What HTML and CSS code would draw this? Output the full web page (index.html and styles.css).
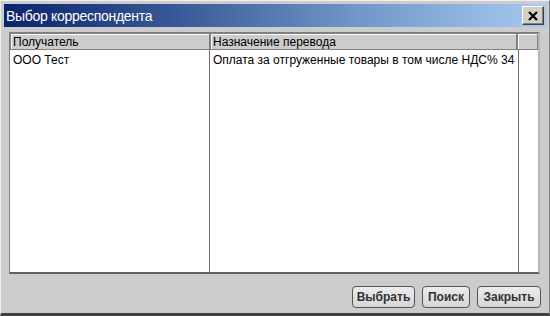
FILE: index.html
```html
<!DOCTYPE html>
<html lang="ru">
<head>
    <meta charset="UTF-8">
    <title>Выбор корреспондента</title>
    <link rel="stylesheet" href="styles.css">
</head>
<body>
    <div class="window">
        <div class="titlebar">
            <span class="title">Выбор корреспондента</span>
            <button class="close" type="button">
                <svg viewBox="0 0 10 10" width="10" height="10"><path d="M1 1L9 9M9 1L1 9" stroke="#000" stroke-width="2.2"></path></svg>
            </button>
        </div>

        <div class="table">
            <div class="table-head">
                <div class="th col-name">Получатель</div>
                <div class="th col-purpose">Назначение перевода</div>
                <div class="th col-corner"></div>
            </div>
            <div class="table-body">
                <div class="td col-name">ООО Тест</div>
                <div class="td col-purpose">Оплата за отгруженные товары в том числе НДС% 34</div>
                <div class="td col-corner"></div>
            </div>
        </div>

        <div class="buttons">
            <button class="btn btn-select" type="button">Выбрать</button>
            <button class="btn btn-search" type="button">Поиск</button>
            <button class="btn btn-close" type="button">Закрыть</button>
        </div>
    </div>
</body>
</html>
```

FILE: styles.css
```css
body {
    margin: 0;
    font-family: 'Liberation Sans', Arial, sans-serif;
    background: #cccccc;
}

.window {
    box-sizing: border-box;
    width: 550px;
    height: 316px;
    background: #cccccc;
    border-left: 1px solid #f0ede0;
    border-top: 1px solid #f0f0f0;
    border-right: 1px solid #808080;
    border-bottom: 3px solid #404040;
    padding: 3px 3px 0 3px;
    display: flex;
    flex-direction: column;
}

.titlebar {
    height: 23px;
    display: flex;
    align-items: center;
    justify-content: space-between;
    background: linear-gradient(to right, #0a246a 0%, #3d5f9c 35%, #7097c8 65%, #a6caf0 100%);
    padding: 0 2px 0 1px;
}

.title {
    color: #fff;
    font-size: 14px;
    letter-spacing: -0.3px;
    padding-left: 1px;
    padding-top: 1px;
}

.close {
    width: 22px;
    height: 19px;
    padding: 0;
    display: flex;
    align-items: center;
    justify-content: center;
    background: #d4d0c8;
    border: 1px solid;
    border-color: #fff #404040 #404040 #fff;
    box-shadow: inset -1px -1px 0 #808080;
}

.table {
    margin: 5px 6px 0 5px;
    height: 242px;
    box-sizing: border-box;
    background: #fff;
    border-top: 1px solid #808080;
    border-left: 1px solid #808080;
    border-bottom: 2px solid #606060;
    border-right: 2px solid #b8b8b8;
    display: flex;
    flex-direction: column;
    font-size: 12px;
    color: #000;
}

.table-head {
    display: flex;
    height: 17px;
    background: #cccccc;
}

.th {
    box-sizing: border-box;
    border: 1px solid;
    border-color: #808080;
    box-shadow: inset 1px 1px 0 #fff;
    padding: 1px 2px 0 2px;
    line-height: 14px;
    white-space: nowrap;
    overflow: hidden;
}

.col-name {
    width: 200px;
    flex: none;
}

.col-purpose {
    width: 307px;
    flex: none;
}

.col-corner {
    flex: 1;
}

.table-body {
    flex: 1;
    display: flex;
}

.td {
    box-sizing: border-box;
    padding: 3px 3px 0 3px;
    line-height: 14px;
    white-space: nowrap;
    overflow: hidden;
}

.table-body .col-name {
    border-right: 1px solid #707070;
}

.table-body .col-purpose {
    width: 309px;
    border-right: 1px solid #707070;
}

.buttons {
    display: flex;
    justify-content: flex-end;
    gap: 7px;
    padding: 12px 5px 0 0;
}

.btn {
    height: 22px;
    padding: 0;
    font-family: 'Liberation Sans', Arial, sans-serif;
    font-size: 12px;
    font-weight: bold;
    color: #333;
    background: linear-gradient(to bottom, #ececec, #d6d6d6);
    border: 1px solid #555;
    border-radius: 4px;
}

.btn-select {
    width: 63px;
}

.btn-search {
    width: 48px;
}

.btn-close {
    width: 64px;
}
```
